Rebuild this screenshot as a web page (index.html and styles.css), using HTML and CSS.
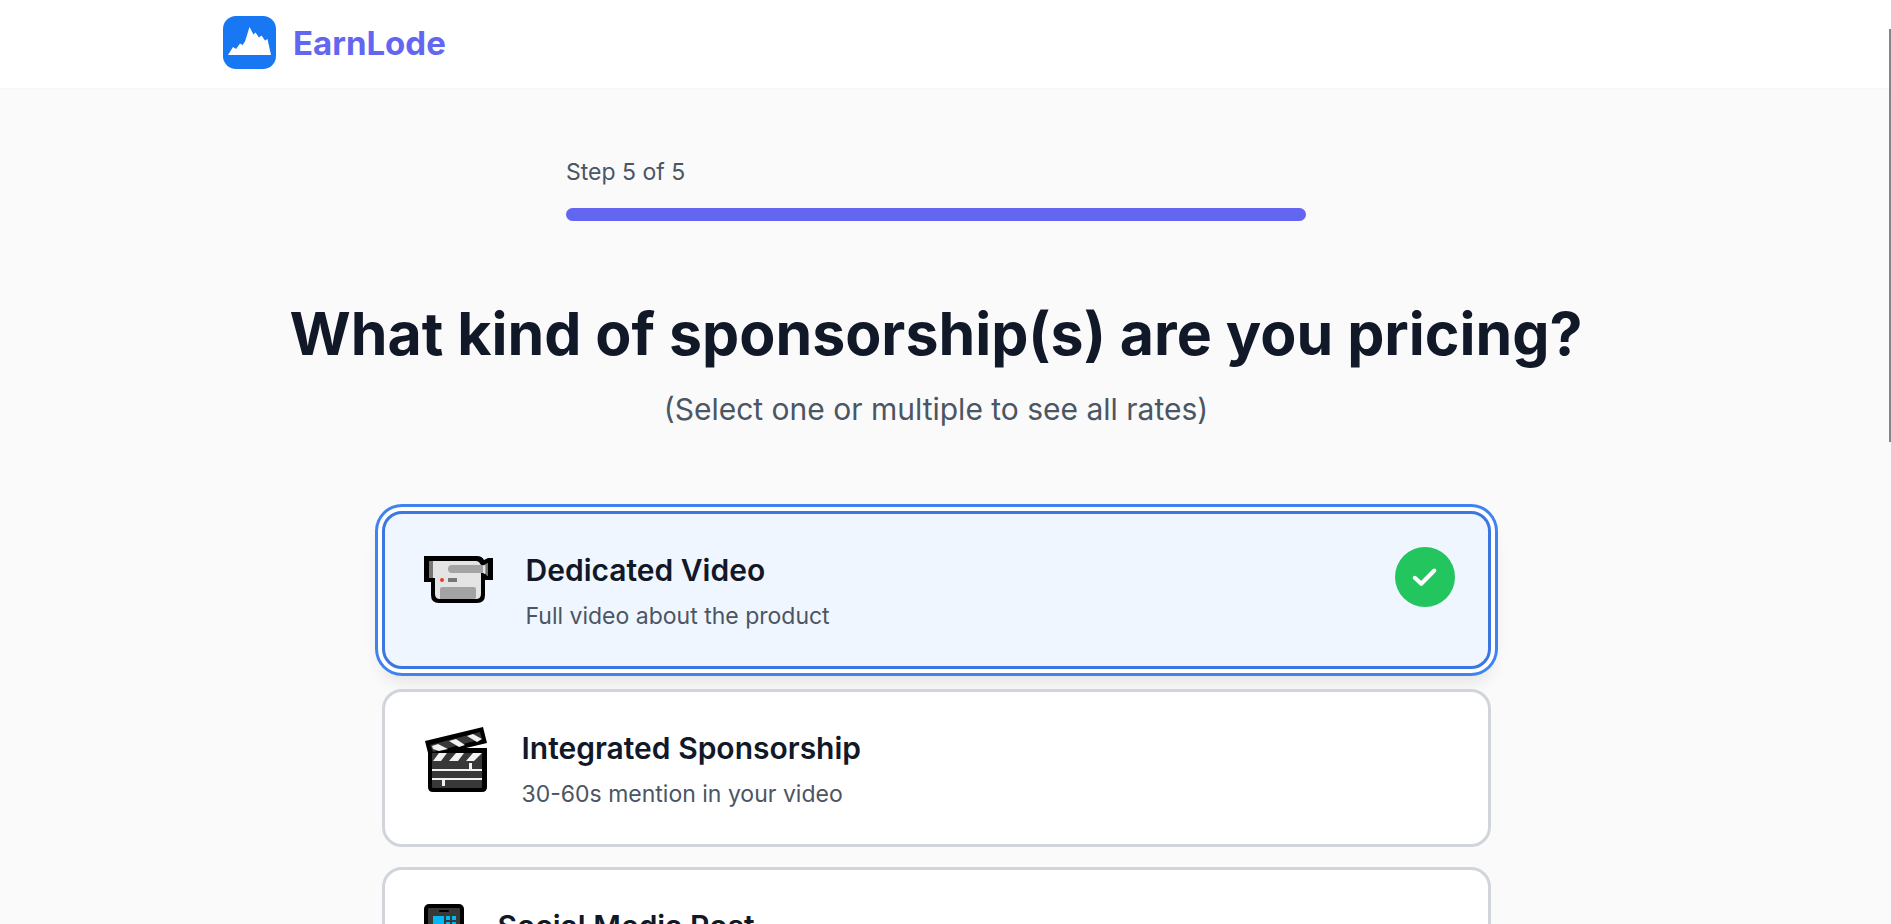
FILE: index.html
```html
<!DOCTYPE html>
<html lang="en">
<head>
    <meta charset="UTF-8">
    <meta name="viewport" content="width=device-width, initial-scale=1.0">
    <title>EarnLode</title>
    <link rel="stylesheet" href="styles.css">
</head>
<body>

    <header class="site-header">
        <div class="header-inner">
            <a href="#" class="brand">
                <svg class="brand-logo" viewBox="0 0 53 53" aria-hidden="true">
                    <rect width="53" height="53" rx="13" fill="#1877f2"/>
                    <path d="M5 39 L10 31 L13 33 L17 27.500 L19.500 29 L22 25.500 L26.500 11 L30.500 18.500 L32.500 16.500 L36 21.500 L38.500 19.500 L42 24.500 L44.500 23 L48 39 Z" fill="#fff"/>
                </svg>
                <span>EarnLode</span>
            </a>
        </div>
    </header>

    <main class="page">
        <div class="progress">
            <p class="progress-label">Step 5 of 5</p>
            <div class="progress-track">
                <div class="progress-bar" style="width: 100%"></div>
            </div>
        </div>

        <h1>What kind of sponsorship(s) are you pricing?</h1>
        <p class="subtitle">(Select one or multiple to see all rates)</p>

        <div class="options">
            <button type="button" class="option selected" aria-pressed="true">
                <svg class="option-icon" width="80" height="72" viewBox="0 0 80 72" aria-hidden="true">
                    <path d="M6 9 H59 Q64 9 66 13 L70 11 H75 V33 H67 V48 Q67 56 59 56 H21 Q13 56 13 48 V35 H6 Z" fill="#000"/>
                    <path d="M11 14 H58 Q61 14 63 18 V47 Q63 52 58 52 H22 Q17 52 17 47 V31 H11 Z" fill="#e4e4e4"/>
                    <path d="M11 14 H15 V31 H11 Z" fill="#767676"/>
                    <path d="M34 18 H66 L70 16 V29 L66 26 H34 Q30 26 30 22 Q30 18 34 18 Z" fill="#a3a3a3"/>
                    <path d="M65 19 L67 18 V27 L65 26 Z" fill="#e4e4e4"/>
                    <path d="M68 17 L70 16 V29 L68 28 Z" fill="#767676"/>
                    <circle cx="24" cy="33" r="2" fill="#f03a17"/>
                    <rect x="30" y="31" width="9" height="4" fill="#767676"/>
                    <path d="M22 42 Q22 40 24 40 H56 Q58 40 58 42 V50 Q58 52 56 52 H22 Z" fill="#a3a3a3"/>
                </svg>
                <span class="option-text">
                    <span class="option-title">Dedicated Video</span>
                    <span class="option-desc">Full video about the product</span>
                </span>
                <span class="check">
                    <svg width="34" height="34" viewBox="0 0 20 20" aria-hidden="true">
                        <path d="M4 10.500 L7.800 14 L15.500 6.200" fill="none" stroke="#fff" stroke-width="2.400" stroke-linecap="round" stroke-linejoin="round"/>
                    </svg>
                </span>
            </button>

            <button type="button" class="option" aria-pressed="false">
                <svg class="option-icon" width="76" height="72" viewBox="0 0 76 72" aria-hidden="true">
                    <path d="M7 16 L65 2 L69 18 L48 23 H69 V62 Q69 67 64 67 H15 Q10 67 10 62 V28 Z" fill="#000"/>
                    <path d="M12 20 L62 7 L64 14 L27 24 L15 27 Z" fill="#383838"/>
                    <rect x="14" y="28" width="50" height="35" rx="1" fill="#383838"/>
                    <path d="M14 21 L20 19 L30 24 L21 26 L15 24 Z M31 16 L38 14 L47 20 L41 22 Z M49 11 L55 9 L64 14 L59 17 Z" fill="#f2f2f2"/>
                    <path d="M21 28 H29 L23 36 H15 Z M38 28 H46 L40 36 H31 Z M55 28 H64 L56 36 H48 Z" fill="#f2f2f2"/>
                    <path d="M14 44 H51 V38 H54 V44 H64 V46 H14 Z M14 53 H64 V55 H27 V61 H24 V55 H14 Z" fill="#f2f2f2"/>
                </svg>
                <span class="option-text">
                    <span class="option-title">Integrated Sponsorship</span>
                    <span class="option-desc">30-60s mention in your video</span>
                </span>
            </button>

            <button type="button" class="option" aria-pressed="false">
                <svg class="option-icon" width="52" height="72" viewBox="0 0 52 72" aria-hidden="true">
                    <rect x="6" y="1" width="40" height="68" rx="5" fill="#000"/>
                    <rect x="10" y="5" width="32" height="60" rx="1" fill="#383838"/>
                    <rect x="21" y="7" width="10" height="2" rx="1" fill="#000"/>
                    <path d="M15 13 H26 V24 H15 Z M28 13 H32 V17 H28 Z M34 13 H38 V17 H34 Z M28 19 H32 V24 H28 Z M34 19 H38 V24 H34 Z M15 26 H38 V36 H15 Z" fill="#00b8f4"/>
                </svg>
                <span class="option-text">
                    <span class="option-title">Social Media Post</span>
                </span>
            </button>
        </div>
    </main>

    <div class="scroll-thumb"></div>

</body>
</html>
```

FILE: styles.css
```css
* {
    box-sizing: border-box;
}
body {
    margin: 0;
    padding-right: 19px;
    height: 100vh;
    overflow: hidden;
    background-color: #fafafa;
    color: #111827;
    font-family: Inter, sans-serif;
}
h1, p {
    margin: 0;
}

/* Header */
.site-header {
    height: 89px;
    margin-right: -19px;
    padding-right: 19px;
    background-color: #fff;
    border-bottom: 1px solid #f7f7f8;
}
.header-inner {
    max-width: 1478px;
    margin: 0 auto;
    padding: 16px 26px;
}
.brand {
    display: inline-flex;
    align-items: center;
    gap: 17px;
    color: #6366f1;
    font-size: 33px;
    font-weight: 700;
    text-decoration: none;
}
.brand-logo {
    width: 53px;
    height: 53px;
}

/* Progress */
.page {
    padding-top: 66px;
}
.progress {
    max-width: 740px;
    margin: 0 auto 79px;
}
.progress-label {
    margin-bottom: 19px;
    color: #4b5563;
    font-size: 23px;
    line-height: 34px;
}
.progress-track {
    height: 13px;
    border-radius: 7px;
    background-color: #e5e7eb;
}
.progress-bar {
    height: 100%;
    border-radius: 7px;
    background-color: #6366f1;
}

h1 {
    font-size: 59px;
    font-weight: 700;
    line-height: 68px;
    text-align: center;
}
.subtitle {
    margin-top: 21px;
    color: #4b5563;
    font-size: 30px;
    line-height: 40px;
    text-align: center;
}

/* Options */
.options {
    display: flex;
    flex-direction: column;
    gap: 20px;
    max-width: 1109px;
    margin: 82px auto 0;
}
.option {
    display: flex;
    align-items: flex-start;
    gap: 28px;
    min-height: 158px;
    padding: 33px;
    border: 3px solid #d1d5db;
    border-radius: 20px;
    background-color: #fff;
    color: inherit;
    font-family: inherit;
    text-align: left;
    cursor: pointer;
}
.option.selected {
    border-color: #3b76e1;
    background-color: #eff6ff;
    box-shadow: 0 0 0 4px #fff, 0 0 0 7px #3f83f0, 0 12px 18px rgba(0, 0, 0, 0.1);
}
.option-icon {
    flex: none;
}
.option-text {
    flex: 1;
    padding: 3px 0 1px;
}
.option-title {
    display: block;
    margin-bottom: 10px;
    font-size: 30px;
    font-weight: 600;
    line-height: 40px;
}
.option-desc {
    display: block;
    color: #4b5563;
    font-size: 23px;
    line-height: 32px;
}
.check {
    display: flex;
    align-items: center;
    justify-content: center;
    width: 60px;
    height: 60px;
    border-radius: 50%;
    background-color: #22c55e;
}

/* Scroll indicator on the window edge */
.scroll-thumb {
    position: fixed;
    top: 29px;
    right: 0;
    width: 2px;
    height: 413px;
    background-color: #858585;
}
```
